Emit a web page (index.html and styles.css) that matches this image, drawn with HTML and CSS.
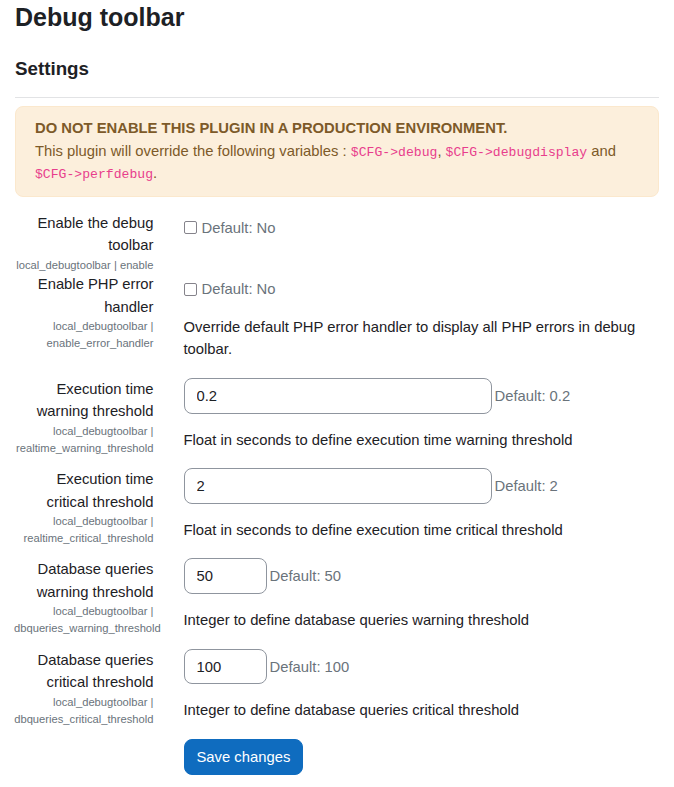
FILE: index.html
```html
<!DOCTYPE html>
<html lang="en">
<head>
<meta charset="utf-8">
<title>Debug toolbar</title>
<link rel="stylesheet" href="styles.css">
</head>
<body>
<div class="page">
  <h2 class="page-title">Debug toolbar</h2>
  <h3 class="section-title">Settings</h3>
  <hr class="divider">
  <div class="alert">
    <div class="alert-title">DO NOT ENABLE THIS PLUGIN IN A PRODUCTION ENVIRONMENT.</div>
    <div>This plugin will override the following variables : <code>$CFG-&gt;debug</code>, <code>$CFG-&gt;debugdisplay</code> and <code>$CFG-&gt;perfdebug</code>.</div>
  </div>

  <form class="settings">
    <div class="form-item">
      <div class="form-label">
        <label for="s_enable">Enable the debug toolbar</label>
        <span class="form-shortname">local_debugtoolbar | enable</span>
      </div>
      <div class="form-setting">
        <div class="form-checkbox">
          <input type="checkbox" id="s_enable" class="check">
          <span class="form-defaultinfo">Default: No</span>
        </div>
      </div>
    </div>

    <div class="form-item">
      <div class="form-label">
        <label for="s_handler">Enable PHP error handler</label>
        <span class="form-shortname">local_debugtoolbar | enable_error_handler</span>
      </div>
      <div class="form-setting">
        <div class="form-checkbox">
          <input type="checkbox" id="s_handler" class="check">
          <span class="form-defaultinfo">Default: No</span>
        </div>
        <div class="form-description"><p>Override default PHP error handler to display all PHP errors in debug toolbar.</p></div>
      </div>
    </div>

    <div class="form-item">
      <div class="form-label">
        <label for="s_rtw">Execution time warning threshold</label>
        <span class="form-shortname">local_debugtoolbar | realtime_warning_threshold</span>
      </div>
      <div class="form-setting">
        <div class="form-text">
          <input type="text" id="s_rtw" class="form-control wide" value="0.2">
          <span class="form-defaultinfo inline">Default: 0.2</span>
        </div>
        <div class="form-description"><p>Float in seconds to define execution time warning threshold</p></div>
      </div>
    </div>

    <div class="form-item">
      <div class="form-label">
        <label for="s_rtc">Execution time critical threshold</label>
        <span class="form-shortname">local_debugtoolbar | realtime_critical_threshold</span>
      </div>
      <div class="form-setting">
        <div class="form-text">
          <input type="text" id="s_rtc" class="form-control wide" value="2">
          <span class="form-defaultinfo inline">Default: 2</span>
        </div>
        <div class="form-description"><p>Float in seconds to define execution time critical threshold</p></div>
      </div>
    </div>

    <div class="form-item">
      <div class="form-label">
        <label for="s_dbw">Database queries warning threshold</label>
        <span class="form-shortname">local_debugtoolbar | dbqueries_warning_threshold</span>
      </div>
      <div class="form-setting">
        <div class="form-text">
          <input type="text" id="s_dbw" class="form-control narrow" value="50">
          <span class="form-defaultinfo inline">Default: 50</span>
        </div>
        <div class="form-description"><p>Integer to define database queries warning threshold</p></div>
      </div>
    </div>

    <div class="form-item">
      <div class="form-label">
        <label for="s_dbc">Database queries critical threshold</label>
        <span class="form-shortname">local_debugtoolbar | dbqueries_critical_threshold</span>
      </div>
      <div class="form-setting">
        <div class="form-text">
          <input type="text" id="s_dbc" class="form-control narrow" value="100">
          <span class="form-defaultinfo inline">Default: 100</span>
        </div>
        <div class="form-description"><p>Integer to define database queries critical threshold</p></div>
      </div>
    </div>

    <div class="form-item form-buttons">
      <div class="form-setting col-offset">
        <button type="submit" class="btn-primary">Save changes</button>
      </div>
    </div>
  </form>
</div>
</body>
</html>
```

FILE: styles.css
```css
* {
  box-sizing: border-box;
}

body {
  margin: 0;
  font-family: "Liberation Sans", Arial, sans-serif;
  font-size: 14.8px;
  line-height: 22.5px;
  color: #1d2125;
  background: #fff;
}

.page {
  padding: 2px 15px 0;
}

.page-title {
  font-size: 25px;
  font-weight: 700;
  line-height: 30px;
  margin: 0;
}

.section-title {
  font-size: 18.75px;
  font-weight: 700;
  line-height: 22.5px;
  margin: 26px 0 0;
}

.divider {
  height: 0;
  border: 0;
  border-top: 1px solid #e2e3e5;
  margin: 16px 0 8px;
}

.alert {
  background: #fcefdc;
  border: 1px solid #fbe8cd;
  color: #7d5a29;
  border-radius: 8px;
  padding: 10.75px 19px;
  margin-bottom: 15px;
}

.alert-title {
  font-weight: 700;
}

.alert code {
  font-family: "Liberation Mono", monospace;
  font-size: 13.125px;
  line-height: 1;
  color: #e83e8c;
}

.settings {
  margin: 0;
}

.form-item {
  display: grid;
  grid-template-columns: 25% 75%;
  margin: 0 -15px;
}

.form-label {
  padding: 0 15px 0 14px;
  text-align: right;
}

.form-label label {
  display: block;
}

.form-shortname {
  display: block;
  font-size: 11.2px;
  line-height: 16.875px;
  color: #6a737b;
}

.form-setting {
  padding: 0 15px;
  min-width: 0;
}

.col-offset {
  grid-column: 2;
}

.form-checkbox {
  display: flex;
  align-items: center;
  height: 22.5px;
  margin-top: 5px;
}

.check {
  appearance: none;
  -webkit-appearance: none;
  flex: none;
  width: 13px;
  height: 13px;
  margin: 0 5px 0 0;
  border: 1.5px solid #85838b;
  border-radius: 2px;
  background: #fff;
}

.form-defaultinfo {
  color: #6a737b;
}

.form-defaultinfo.inline {
  margin-left: 3px;
}

.form-text {
  display: flex;
  align-items: baseline;
}

.form-control {
  font-family: inherit;
  font-size: 14.8px;
  line-height: 22.5px;
  color: #1d2125;
  height: 35.75px;
  padding: 5.625px 12px;
  border: 1px solid #8f959e;
  border-radius: 8px;
  background: #fff;
}

.form-control.wide {
  width: 308px;
}

.form-control.narrow {
  width: 83px;
}

.form-description {
  margin-top: 15px;
}

.form-description p {
  margin: 0 0 17px;
}

.btn-primary {
  font-family: inherit;
  font-size: 14.8px;
  line-height: 22.5px;
  color: #fff;
  background: #0f6cbf;
  border: 1px solid #0f6cbf;
  border-radius: 8px;
  padding: 6px 12px;
  cursor: pointer;
}
```
